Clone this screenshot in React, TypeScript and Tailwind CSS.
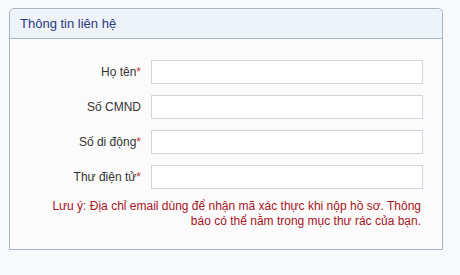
import React from "react";

const FIELDS = [
  { label: "Họ tên", required: true },
  { label: "Số CMND", required: false },
  { label: "Số di động", required: true },
  { label: "Thư điện tử", required: true },
];

export default function App() {
  return (
    <div className="min-h-screen w-[460px] bg-[#f8f9fb] pl-[9px] pt-[8px] font-['Liberation_Sans',Arial,sans-serif]">
      <div className="w-[434px] rounded-t-[5px] border border-[#aab3c3] bg-[#fbfbfc]">
        {/* Panel header */}
        <div className="flex h-[30px] items-center rounded-t-[5px] border-b border-[#aab3c3] bg-[#eef3fa] px-[10px]">
          <span className="text-[13px] text-[#2b3a7e]">Thông tin liên hệ</span>
        </div>

        {/* Form rows */}
        <div className="flex flex-col gap-[11px] pt-[21px]">
          {FIELDS.map((f) => (
            <div key={f.label} className="flex items-center gap-[10px]">
              <label className="w-[131px] text-right text-[12px] text-[#333]">
                {f.label}
                {f.required && <span className="text-[#c0392b]">*</span>}
              </label>
              <input
                type="text"
                className="h-[24px] w-[272px] border border-[#cfd5de] bg-white px-1 text-[12px] outline-none"
              />
            </div>
          ))}
        </div>

        <p className="mr-[21px] mt-[10px] mb-[20px] text-right text-[12px] leading-[15px] text-[#a8141c]">
          Lưu ý: Địa chỉ email dùng để nhận mã xác thực khi nộp hồ sơ. Thông
          <br />
          báo có thể nằm trong mục thư rác của bạn.
        </p>
      </div>
    </div>
  );
}
